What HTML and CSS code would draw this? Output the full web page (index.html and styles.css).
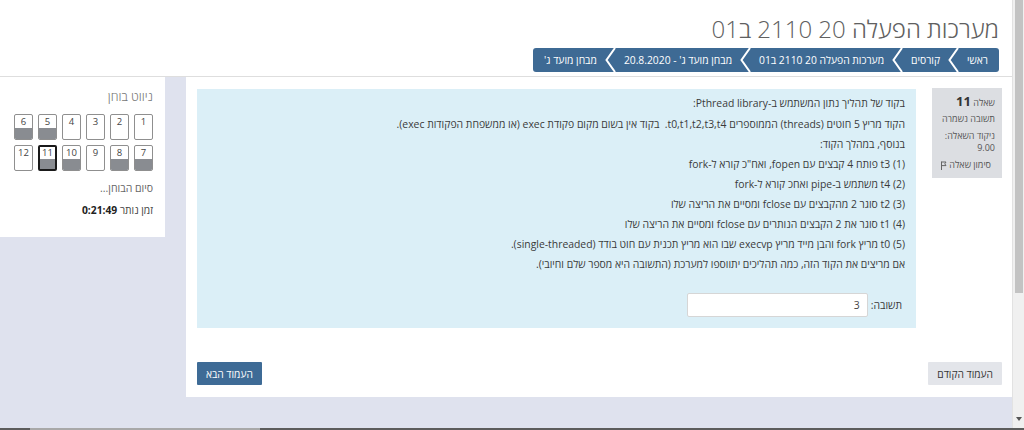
FILE: index.html
```html
<!DOCTYPE html>
<html lang="he">
<head>
<meta charset="utf-8">
<title>מבחן מועד ג'</title>
<link rel="stylesheet" href="styles.css">
</head>
<body>
<div class="screen">
  <div class="viewport" dir="rtl">
    <header class="page-header">
      <h1 class="title">מערכות הפעלה 20 2110 ב01</h1>
      <nav class="crumbs">
        <span class="crumb">ראשי</span>
        <svg class="sep" width="11" height="24" viewBox="0 0 11 24"><polyline points="10,0 1.5,12 10,24" fill="none" stroke="#fff" stroke-width="2"/></svg>
        <span class="crumb">קורסים</span>
        <svg class="sep" width="11" height="24" viewBox="0 0 11 24"><polyline points="10,0 1.5,12 10,24" fill="none" stroke="#fff" stroke-width="2"/></svg>
        <span class="crumb">מערכות הפעלה 20 2110 ב01</span>
        <svg class="sep" width="11" height="24" viewBox="0 0 11 24"><polyline points="10,0 1.5,12 10,24" fill="none" stroke="#fff" stroke-width="2"/></svg>
        <span class="crumb">מבחן מועד ג' - 20.8.2020</span>
        <svg class="sep" width="11" height="24" viewBox="0 0 11 24"><polyline points="10,0 1.5,12 10,24" fill="none" stroke="#fff" stroke-width="2"/></svg>
        <span class="crumb">מבחן מועד ג'</span>
      </nav>
    </header>
    <div class="columns">
      <main class="region-main">
        <div class="que">
          <div class="info">
            <h3 class="qno-line">שאלה <span class="qno">11</span></h3>
            <div class="state">תשובה נשמרה</div>
            <div class="grade">ניקוד השאלה:<br>9.00</div>
            <div class="flag"><span>סימון שאלה</span><svg class="flag-icon" width="7" height="9" viewBox="0 0 7 9"><path d="M1.5 0.5V9M1.5 1H6L4.8 2.8 6 4.6H1.5" fill="none" stroke="#666" stroke-width="1"/></svg></div>
          </div>
          <div class="formulation">
            <p class="first">בקוד של תהליך נתון המשתמש ב-Pthread library:</p>
            <p>הקוד מריץ 5 חוטים (threads) הממוספרים t0,t1,t2,t3,t4.&nbsp; בקוד אין בשום מקום פקודת exec (או ממשפחת הפקודות exec).</p>
            <p>בנוסף, במהלך הקוד:</p>
            <p>(1) t3 פותח 4 קבצים עם fopen, ואח"כ קורא ל-fork</p>
            <p>(2) t4 משתמש ב-pipe ואחכ קורא ל-fork</p>
            <p>(3) t2 סוגר 2 מהקבצים עם fclose ומסיים את הריצה שלו</p>
            <p>(4) t1 סוגר את 2 הקבצים הנותרים עם fclose ומסיים את הריצה שלו</p>
            <p>(5) t0 מריץ fork והבן מייד מריץ execvp שבו הוא מריץ תכנית עם חוט בודד (single-threaded).</p>
            <p>אם מריצים את הקוד הזה, כמה תהליכים יתווספו למערכת (התשובה היא מספר שלם וחיובי).</p>
            <div class="answer">
              <label class="answer-label" for="ans">תשובה:</label>
              <input class="answer-input" id="ans" type="text" value="3">
            </div>
          </div>
        </div>
        <div class="submitbtns">
          <button class="btn prev">העמוד הקודם</button>
          <button class="btn next">העמוד הבא</button>
        </div>
      </main>
      <aside class="navblock">
        <h2 class="nav-title">ניווט בוחן</h2>
        <div class="qn-grid">
          <div class="qnbutton"><span class="num">1</span><span class="light"></span></div>
          <div class="qnbutton"><span class="num">2</span><span class="light"></span></div>
          <div class="qnbutton"><span class="num">3</span><span class="light"></span></div>
          <div class="qnbutton"><span class="num">4</span><span class="light"></span></div>
          <div class="qnbutton saved"><span class="num">5</span><span class="light"></span></div>
          <div class="qnbutton saved"><span class="num">6</span><span class="light"></span></div>
          <div class="qnbutton saved"><span class="num">7</span><span class="light"></span></div>
          <div class="qnbutton saved"><span class="num">8</span><span class="light"></span></div>
          <div class="qnbutton"><span class="num">9</span><span class="light"></span></div>
          <div class="qnbutton saved"><span class="num">10</span><span class="light"></span></div>
          <div class="qnbutton saved current"><span class="num">11</span><span class="light"></span></div>
          <div class="qnbutton"><span class="num">12</span><span class="light"></span></div>
        </div>
        <div class="endtest">סיום הבוחן...</div>
        <div class="timer">זמן נותר <b>0:21:49</b></div>
      </aside>
    </div>
  </div>
  <div class="vscroll">
    <div class="vthumb"></div>
    <div class="vtrack"></div>
    <div class="varrow"></div>
  </div>
</div>
<div class="hscroll"><div class="hleft"></div><div class="hthumb"></div><div class="hrest"></div></div>
</body>
</html>
```
FILE: styles.css
```css
* { box-sizing: border-box; }
html, body { margin: 0; padding: 0; }
body {
  width: 1024px;
  height: 430px;
  overflow: hidden;
  background: #dfe2ee;
  font-family: "Open Sans", "DejaVu Sans", sans-serif;
  color: #333;
}
.screen { display: flex; height: 428px; }
.viewport {
  width: 1012px;
  display: flex;
  flex-direction: column;
  background: #dfe2ee;
}

/* header */
.page-header {
  background: #fff;
  padding: 12px 13px 4px;
  border-bottom: 1px solid #dedede;
  display: flex;
  flex-direction: column;
}
.title {
  margin: 0;
  font-size: 24px;
  line-height: 34px;
  font-weight: 300;
  color: #606060;
}
.crumbs {
  margin-top: 2px;
  align-self: flex-start;
  display: flex;
  align-items: center;
  height: 24px;
  padding: 0 11px;
  background: #3e6a94;
  border-radius: 3px;
  color: #fff;
  font-size: 10.3px;
  white-space: nowrap;
}
.sep { margin: 0 8px; display: block; }

/* columns */
.columns {
  display: flex;
  gap: 21px;
  align-items: flex-start;
}
.region-main {
  width: 826px;
  background: #fff;
  padding: 12px 10px 12px 11px;
}
.que { display: flex; gap: 16px; align-items: flex-start; }
.info {
  width: 70px;
  margin-top: -1px;
  background: #dcdee2;
  padding: 4px 7px 6px;
  font-size: 9px;
  color: #555;
  white-space: nowrap;
}
.qno-line { margin: 0; font-weight: 400; font-size: 9px; line-height: 18px; }
.qno { font-size: 13px; font-weight: 700; color: #333; }
.state { line-height: 14px; }
.grade { margin-top: 4px; line-height: 12px; }
.flag { margin-top: 4px; line-height: 14px; padding-right: 4px; display: flex; align-items: center; gap: 2px; }
.flag-icon { display: block; }

.formulation {
  width: 719px;
  background: #dbeff7;
  padding: 4px 11px 11px;
  font-size: 10.4px;
  color: #3a3a3a;
}
.formulation p { margin: 0; line-height: 20px; }
.formulation p.first { margin-bottom: 1px; }
.answer { display: flex; align-items: center; gap: 3px; margin-top: 19px; height: 24px; }
.answer-label { padding-right: 3px; }
.answer-input {
  width: 181px;
  height: 24px;
  border: 1px solid #d6d6d6;
  border-radius: 2px;
  background: #fff;
  font: inherit;
  font-size: 10.4px;
  color: #444;
  padding: 0 7px;
  text-align: right;
  direction: rtl;
}

.submitbtns {
  display: flex;
  justify-content: space-between;
  margin-top: 34px;
}
.btn {
  height: 23px;
  border: 0;
  border-radius: 1px;
  padding: 0 9px;
  font-family: inherit;
  font-size: 10.2px;
}
.btn.prev { background: #e3e5ea; color: #333; }
.btn.next { background: #3e6b96; color: #fff; }

/* quiz navigation block */
.navblock {
  width: 165px;
  background: #fff;
  padding: 10px 12px 19px;
}
.nav-title {
  margin: 0;
  font-size: 12.5px;
  line-height: 20px;
  font-weight: 300;
  color: #777;
}
.qn-grid {
  margin-top: 7px;
  width: 139px;
  display: flex;
  flex-wrap: wrap;
  gap: 5px;
}
.qnbutton {
  width: 19px;
  height: 26px;
  border: 1px solid #8f8f8f;
  border-radius: 2px;
  background: #fff;
  display: flex;
  flex-direction: column;
  overflow: hidden;
}
.qnbutton .num {
  height: 13px;
  line-height: 13px;
  font-size: 9.5px;
  text-align: center;
  color: #444;
}
.qnbutton .light { flex: 1; }
.qnbutton.saved .light { background: #898c91; }
.qnbutton.current { border: 2px solid #1a1a1a; }
.qnbutton.current .num { height: 12px; line-height: 12px; }

.endtest {
  margin-top: 9px;
  font-size: 10.5px;
  line-height: 16px;
  color: #666;
}
.timer {
  margin-top: 6px;
  font-size: 10.3px;
  line-height: 16px;
  color: #444;
}
.timer b { color: #222; }

/* window scrollbars */
.vscroll {
  width: 12px;
  display: flex;
  flex-direction: column;
  background: #f0f0f0;
  border-left: 1px solid #e2e2e2;
}
.vthumb { height: 293px; margin: 0 1px 0 2px; background: #c3c3c3; }
.vtrack { flex: 1; }
.varrow {
  height: 8px;
  margin: 0 auto 3px;
  width: 0;
  border-left: 3px solid transparent;
  border-right: 3px solid transparent;
  border-top: 4px solid #555;
}
.hscroll { height: 2px; display: flex; }
.hleft { width: 30px; background: #5c5c5c; }
.hthumb { width: 230px; background: #a8a8a8; }
.hrest { flex: 1; background: #5c5c5c; }
```
